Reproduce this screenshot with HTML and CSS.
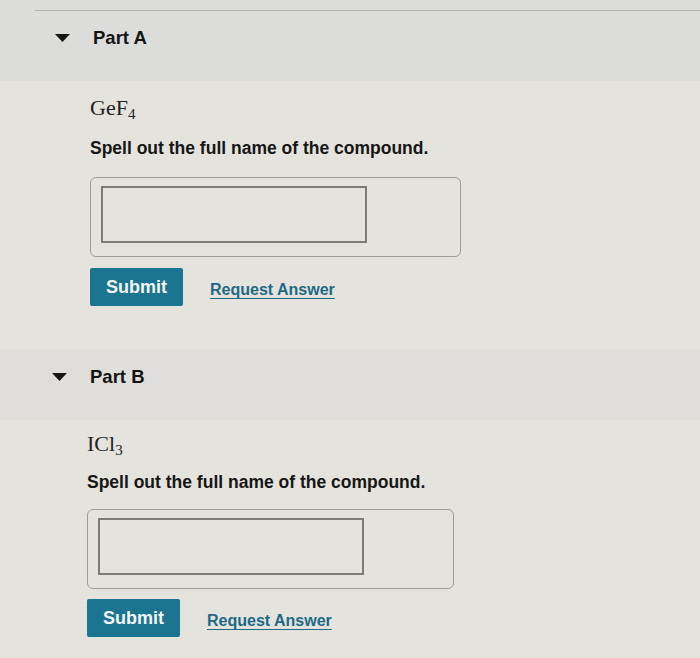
FILE: index.html
```html
<!DOCTYPE html>
<html lang="en">
<head>
<meta charset="utf-8">
<title>Parts</title>
<link rel="stylesheet" href="styles.css">
</head>
<body>
<div class="page">
  <div class="top-space"><div class="rule"></div></div>

  <section class="part">
    <div class="part-header">
      <svg class="caret" width="15" height="8" viewBox="0 0 15 8"><path d="M0 0 H15 L7.5 8 Z" fill="#151515"/></svg>
      <span class="part-title">Part A</span>
    </div>
    <div class="part-body">
      <div class="formula">GeF<sub>4</sub></div>
      <p class="prompt">Spell out the full name of the compound.</p>
      <div class="answer-box"><input class="answer-input" type="text" aria-label="Answer"></div>
      <div class="actions">
        <button class="submit" type="button">Submit</button>
        <a class="request" href="#">Request Answer</a>
      </div>
    </div>
  </section>

  <section class="part part-b">
    <div class="part-header">
      <svg class="caret" width="15" height="8" viewBox="0 0 15 8"><path d="M0 0 H15 L7.5 8 Z" fill="#151515"/></svg>
      <span class="part-title">Part B</span>
    </div>
    <div class="part-body">
      <div class="formula">ICl<sub>3</sub></div>
      <p class="prompt">Spell out the full name of the compound.</p>
      <div class="answer-box"><input class="answer-input" type="text" aria-label="Answer"></div>
      <div class="actions">
        <button class="submit" type="button">Submit</button>
        <a class="request" href="#">Request Answer</a>
      </div>
    </div>
  </section>
</div>
</body>
</html>
```

FILE: styles.css
```css
html, body {
  margin: 0;
  padding: 0;
}
body {
  background: #e5e3de;
  font-family: "Liberation Sans", Arial, Helvetica, sans-serif;
  color: #1a1a1a;
  width: 700px;
  height: 658px;
  overflow: hidden;
}
.page {
  display: flex;
  flex-direction: column;
}
.top-space {
  height: 11px;
  background: #dcdcda;
  display: flex;
  align-items: flex-end;
}
.rule {
  margin-left: 35px;
  flex: 1;
  height: 1px;
  background: #b4b4b2;
}
.part-header {
  height: 70px;
  box-sizing: border-box;
  background: #dcdcda;
  padding: 17px 0 0 55px;
  display: flex;
  align-items: flex-start;
}
.caret {
  margin-top: 6px;
  flex: none;
}
.part-title {
  margin-left: 23px;
  font-weight: bold;
  font-size: 18.5px;
  line-height: 20px;
  color: #141414;
}
.part-body {
  padding: 14px 0 0 90px;
  display: flex;
  flex-direction: column;
  align-items: flex-start;
}
.formula {
  font-family: "Liberation Serif", "Times New Roman", serif;
  font-size: 22px;
  line-height: 26px;
  color: #222;
}
.formula sub {
  font-size: 15px;
  vertical-align: -4px;
  line-height: 0;
}
.prompt {
  margin: 17px 0 0;
  font-weight: bold;
  font-size: 17.5px;
  line-height: 20px;
  color: #161616;
}
.answer-box {
  margin-top: 19px;
  width: 371px;
  height: 80px;
  box-sizing: border-box;
  border: 1px solid #9c9b98;
  border-radius: 6px;
  padding: 8px 10px;
}
.answer-input {
  display: block;
  width: 266px;
  height: 57px;
  box-sizing: border-box;
  margin: 0;
  border: 2px solid #7c7b78;
  border-radius: 0;
  background: transparent;
  outline: none;
}
.actions {
  margin-top: 11px;
  display: flex;
  align-items: center;
}
.submit {
  width: 93px;
  height: 38px;
  margin: 0;
  border: none;
  border-radius: 2px;
  background: #1b7490;
  color: #f2f6f7;
  font-family: "Liberation Sans", Arial, sans-serif;
  font-weight: bold;
  font-size: 18px;
  padding: 0;
}
.request {
  margin-left: 27px;
  margin-top: 6px;
  font-weight: bold;
  font-size: 16px;
  color: #1e6a85;
  text-decoration: underline;
  text-decoration-thickness: 1px;
  text-underline-offset: 3px;
}
.part + .part {
  margin-top: 44px;
}
.part-b .part-header {
  background: #dfdedb;
  padding-left: 52px;
}
.part-b .part-body {
  padding-left: 87px;
  padding-top: 11px;
}
.part-b .prompt {
  margin-top: 15px;
}
.part-b .answer-box {
  margin-top: 17px;
  width: 367px;
}
.part-b .actions {
  margin-top: 10px;
}
```
